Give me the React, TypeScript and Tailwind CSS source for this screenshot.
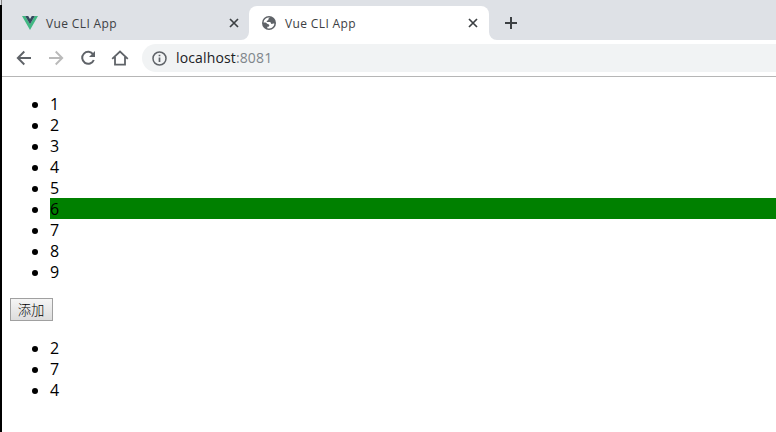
import React from "react";

const UI = "font-['Open_Sans','Noto_Sans_CJK_SC',sans-serif]";

function CloseIcon() {
  return (
    <svg width="10" height="10" viewBox="0 0 10 10" className="shrink-0" stroke="#3c4043" strokeWidth="1.7" fill="none">
      <path d="M1 1l8 8M9 1l-8 8" />
    </svg>
  );
}

function VueLogo() {
  return (
    <svg width="16" height="14" viewBox="0 0 16 14" className="shrink-0">
      <path d="M0 0h3.2L8 8.2 12.8 0H16L8 14z" fill="#41b883" />
      <path d="M3.2 0h3L8 3l1.800-3h3L8 8.300z" fill="#35495e" />
    </svg>
  );
}

function GlobeIcon() {
  return (
    <svg width="14" height="14" viewBox="0 0 14 14" className="shrink-0">
      <circle cx="7" cy="7" r="7" fill="#5f6368" />
      <path
        d="M8.300 1.600C7 2 6.300 2.600 6.400 3.600c0 .8-.7 1-1.400 1.200-.6.3-.5 1 .1 1.100h2.500c1 0 1.200.7 1.300 1.400.2.7 1 .7 1.600.4.7-.3 1.300-.3 2 .1A5.500 5.500 0 0 1 5.300 12.200V10.700c1.100.1 2-.3 2-1.200 0-.9-.7-1.300-1.500-1.400-1-.1-1.200-1.400-2.200-1.500H1.500A5.500 5.500 0 0 1 8.300 1.600z"
        fill="white"
      />
    </svg>
  );
}

function List({ items, active }: { items: number[]; active?: number }) {
  return (
    <ul className="my-4 pl-10 text-[16px] leading-[21px]">
      {items.map((n) => (
        <li key={n} className={n === active ? "flex h-[21px] bg-[#008000]" : "flex h-[21px]"}>
          <span className="-ml-[18px] mr-3 mt-[9px] size-[6px] shrink-0 rounded-full bg-black" />
          <span className="pt-px">{n}</span>
        </li>
      ))}
    </ul>
  );
}

export default function App() {
  return (
    <div className={`flex h-[432px] w-[776px] overflow-hidden bg-white text-black ${UI}`}>
      <div className="flex w-[2px] shrink-0 flex-col">
        <div className="h-[5px] border-r border-[#808080] bg-[#dee1e6]" />
        <div className="flex-1 bg-black" />
      </div>
      <div className="flex min-w-0 flex-1 flex-col">
        <div className="flex h-10 shrink-0 items-end bg-[#dee1e6] text-[12px] text-[#3c4043]">
          <div className="flex h-[34px] w-[247px] shrink-0 items-center pl-5 pr-[10px]">
            <VueLogo />
            <span className="ml-2 flex-1 pt-[2px] tracking-[0.37px]">Vue CLI App</span>
            <CloseIcon />
          </div>
          <div className="relative flex h-[34px] w-[240px] shrink-0 items-center rounded-t-lg bg-white pl-[13px] pr-[11px]">
            <svg width="8" height="8" className="absolute -left-2 bottom-0">
              <path d="M8 0v8H0A8 8 0 0 0 8 0" fill="white" />
            </svg>
            <GlobeIcon />
            <span className="ml-[9px] flex-1 pt-[2px] tracking-[0.37px]">Vue CLI App</span>
            <CloseIcon />
            <svg width="8" height="8" className="absolute -right-2 bottom-0">
              <path d="M0 0v8h8A8 8 0 0 1 0 0" fill="white" />
            </svg>
          </div>
          <div className="flex h-[34px] w-11 items-center justify-center">
            <svg width="12" height="12" viewBox="0 0 12 12" stroke="#3c4043" strokeWidth="2">
              <path d="M6 0v12M0 6h12" />
            </svg>
          </div>
        </div>
        <div className="flex h-[37px] shrink-0 items-start border-b border-[#b6b6b6] pt-1">
          <div className="ml-[14px] mt-[6px] flex gap-4">
            <svg width="16" height="16" viewBox="0 0 16 16" fill="none" stroke="#5f6368" strokeWidth="1.9">
              <path d="M15 8H2.500M8.300 1.500L1.800 8l6.500 6.500" />
            </svg>
            <svg width="16" height="16" viewBox="0 0 16 16" fill="none" stroke="#bababa" strokeWidth="1.9">
              <path d="M1 8h12.500M7.700 1.500L14.200 8l-6.500 6.500" />
            </svg>
            <svg width="16" height="16" viewBox="0 0 16 16" fill="none" stroke="#5f6368" strokeWidth="2">
              <path d="M13.200 4.500A6 6 0 1 0 13.800 10" />
              <path d="M15 1v6H9z" fill="#5f6368" stroke="none" />
            </svg>
            <svg width="18" height="16" viewBox="0 0 18 16" className="-ml-px" fill="none" stroke="#5f6368" strokeWidth="1.800">
              <path d="M1.200 8.800L9 1.500l7.800 7.300M4 7v7.600h10V7" />
            </svg>
          </div>
          <div className="ml-[13px] flex h-7 flex-1 items-center rounded-l-full bg-[#f1f3f4] pl-[10px]">
            <svg width="15" height="15" viewBox="0 0 15 15" fill="none" stroke="#5f6368" strokeWidth="1.500">
              <circle cx="7.500" cy="7.500" r="6.500" />
              <path d="M7.500 6.500V11M7.500 3.800v1.500" strokeWidth="1.700" />
            </svg>
            <span className="ml-[9px] text-[14px] leading-5 tracking-[0.14px] text-[#202124]">
              localhost<span className="text-[#80868b]">:8081</span>
            </span>
          </div>
        </div>
        <main className="flex-1 pl-2">
          <List items={[1, 2, 3, 4, 5, 6, 7, 8, 9]} active={6} />
          <button className="flex h-[23px] w-[43px] items-center justify-center border border-[#a0a0a0] bg-linear-to-b from-[#f5f5f5] to-[#dddddd] pr-px font-['Noto_Sans_CJK_SC',sans-serif] text-[13.333px] font-light leading-none">
            添加
          </button>
          <List items={[2, 7, 4]} />
        </main>
      </div>
    </div>
  );
}
